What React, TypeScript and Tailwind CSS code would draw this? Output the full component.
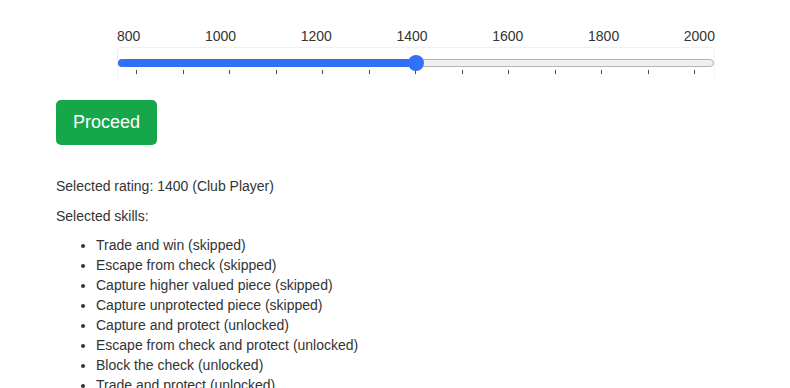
import React from 'react';

const labels = [800, 1000, 1200, 1400, 1600, 1800, 2000];
const ticks = Array.from({ length: 13 }, (_, i) => 800 + i * 100);

const skills = [
    'Trade and win (skipped)',
    'Escape from check (skipped)',
    'Capture higher valued piece (skipped)',
    'Capture unprotected piece (skipped)',
    'Capture and protect (unlocked)',
    'Escape from check and protect (unlocked)',
    'Block the check (unlocked)',
    'Trade and protect (unlocked)',
];

export default function App() {
    const rating = 1400;
    // thumb sits 299px into the 598px track
    const pos = (299 / 598) * 100;

    return (
        <div className="min-h-[388px] bg-white px-[56px] pt-[28px] text-[14px] text-[#333] font-['Liberation_Sans',Arial,sans-serif]">
            {/* rating slider */}
            <div className="ml-[61px] w-[598px]">
                <div className="flex justify-between leading-4">
                    {labels.map((l) => (
                        <span key={l}>{l}</span>
                    ))}
                </div>
                <div className="mt-[3px] h-[33px] rounded-[4px] border border-[#f0f0f0] border-b-0 border-r-[#f4f4f4]">
                    <div className="relative mt-[11px] h-[8px] rounded-full border border-[#b3b3b3] bg-[#efefef]">
                        <div
                            className="absolute -left-px -top-px h-[8px] rounded-full bg-[#3271f7]"
                            style={{ width: `calc(${pos}% + 1px)` }}
                        />
                        <div
                            className="absolute top-[-5px] h-[16px] w-[16px] -translate-x-1/2 rounded-full bg-[#3271f7]"
                            style={{ left: `${pos}%` }}
                        />
                    </div>
                    <div className="mt-[3px] flex justify-between pl-[18px] pr-[19px]">
                        {ticks.map((t) => (
                            <span key={t} className="block h-[4px] w-px bg-[#4a4a4a]" />
                        ))}
                    </div>
                </div>
            </div>

            <button className="mt-[20px] h-[45px] w-[101px] rounded-[5px] bg-[#16a74a] text-[18px] text-white">
                Proceed
            </button>

            <p className="mt-[31px] leading-5">Selected rating: {rating} (Club Player)</p>
            <p className="mt-[10px] leading-5">Selected skills:</p>
            <ul className="mt-[9px] list-disc pl-[40px] leading-5">
                {skills.map((s) => (
                    <li key={s}>{s}</li>
                ))}
            </ul>
        </div>
    );
}
